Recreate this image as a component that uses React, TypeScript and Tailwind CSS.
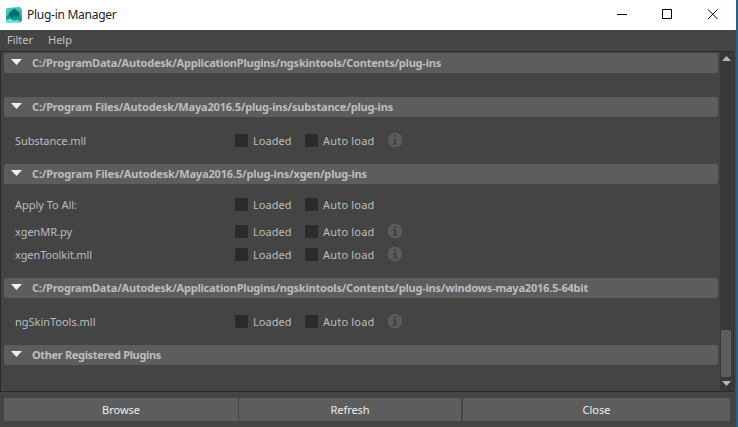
import React from "react";

function Label({ text, width, className = "" }: { text: string; width: number; className?: string }) {
  const ref = React.useRef<HTMLSpanElement>(null);
  const [spacing, setSpacing] = React.useState(0);
  // Tracks the text so that it fills its designated width.
  React.useLayoutEffect(() => {
    if (ref.current) {
      setSpacing((width - ref.current.getBoundingClientRect().width) / text.length);
    }
  }, [text, width]);
  return (
    <span ref={ref} className={`inline-block whitespace-nowrap ${className}`} style={{ letterSpacing: spacing }}>
      {text}
    </span>
  );
}

function Header({ title, width }: { title: string; width: number }) {
  return (
    <div className="flex h-5 w-[714px] shrink-0 items-center rounded-[2px] bg-[#5d5d5d] pl-[7px] text-[11px] font-bold text-[#bdbdbd]">
      <svg className="mr-[10px] -mt-[2px] h-[6px] w-[11px] shrink-0" viewBox="0 0 11 6">
        <path d="M0 0H11L5.5 6Z" fill="#f0f0f0" />
      </svg>
      <Label text={title} width={width} className="mb-[2px]" />
    </div>
  );
}

function Row({ name, width, info = true, className = "h-[23px]" }: { name: string; width: number; info?: boolean; className?: string }) {
  return (
    <div className={`flex shrink-0 items-center pl-[11px] text-[11px] text-[#bdbdbd] ${className}`}>
      <div className="w-[220px]"><Label text={name} width={width} /></div>
      <div className="flex w-[70px] items-center gap-[5px]">
        <span className="h-[13px] w-[13px] rounded-[1px] bg-[#2b2b2b]" />
        <Label text="Loaded" width={38.5} />
      </div>
      <div className="flex w-[82px] items-center gap-[5px]">
        <span className="h-[13px] w-[13px] rounded-[1px] bg-[#2b2b2b]" />
        <Label text="Auto load" width={51.5} />
      </div>
      {info && (
        <svg className="-mt-[1px] h-4 w-4" viewBox="0 0 16 16">
          <circle cx="8" cy="8" r="7.3" fill="#5b5b5b" />
          <path d="M6.8 3h2.5v2H6.8zM5.7 6.5h3.6v5h1.3v1.3H5.5v-1.3h1.3V7.7H5.7z" fill="#444" />
        </svg>
      )}
    </div>
  );
}

export default function App() {
  return (
    <div className="flex h-[427px] w-[738px] overflow-hidden bg-[#444] font-['Noto_Sans',sans-serif] leading-none">
      <div className="flex w-[736px] flex-col">
        <div className="flex h-[30px] shrink-0 items-center bg-white pl-[6px] text-[12px] text-[#222]">
          <svg className="mr-[5px] h-4 w-4" viewBox="0 0 16 16">
            <path d="M1 1L14 0L16 3V14L14 15.5H0V3Z" fill="#3fc4bc" />
            <path d="M0 10L4 5L8 1L14 5L16 11V14L9 13L4 15L0 14Z" fill="#139f98" />
            <path d="M8 2L13 6V11L11 9L10 12L8 8L6 12L5 9L3 11V6Z" fill="#086b65" />
            <path d="M0 13L4 11.5L8 14L12 13L14 15.5H0Z" fill="#6be0d6" />
          </svg>
          <Label text="Plug-in Manager" width={89.5} />
          <svg className="ml-auto h-[30px] w-[130px]" viewBox="0 0 130 30" fill="none" stroke="#000">
            <path d="M11 14.5H21M56.5 9.5H65.5V18.5H56.5ZM102 9.5L111.5 19M111.5 9.5L102 19" />
          </svg>
        </div>
        <div className="flex h-[21px] shrink-0 items-center gap-[15px] pb-[2px] pl-[7px] text-[11px] text-[#c4c4c4]">
          <Label text="Filter" width={26} />
          <Label text="Help" width={24} />
        </div>
        <div className="flex h-[341px] w-[734px] shrink-0 border border-[#2b2b2b]">
          <div className="flex w-[719px] flex-col pl-[3px] pt-[1px]">
            <Header title="C:/ProgramData/Autodesk/ApplicationPlugins/ngskintools/Contents/plug-ins" width={409} />
            <div className="h-6 shrink-0" />
            <Header title="C:/Program Files/Autodesk/Maya2016.5/plug-ins/substance/plug-ins" width={361} />
            <Row name="Substance.mll" width={71} className="h-[47px]" />
            <Header title="C:/Program Files/Autodesk/Maya2016.5/plug-ins/xgen/plug-ins" width={335} />
            <Row name="Apply To All:" width={62} info={false} className="mt-[9px] h-[23px]" />
            <Row name="xgenMR.py" width={57} className="mt-1 h-[23px]" />
            <Row name="xgenToolkit.mll" width={77} />
            <div className="h-3 shrink-0" />
            <Header title="C:/ProgramData/Autodesk/ApplicationPlugins/ngskintools/Contents/plug-ins/windows-maya2016.5-64bit" width={556} />
            <Row name="ngSkinTools.mll" width={80.5} className="h-[47px]" />
            <Header title="Other Registered Plugins" width={129} />
          </div>
          <div className="flex w-3 flex-col items-center bg-[#383838] py-[4px]">
            <svg className="h-[5px] w-[9px] shrink-0" viewBox="0 0 9 5"><path d="M0 5L4.5 0L9 5Z" fill="#b4b4b4" /></svg>
            <div className="mt-[269px] h-[47px] w-[10px] shrink-0 rounded-[2px] bg-[#5d5d5d]" />
            <svg className="mt-1 h-[5px] w-[9px] shrink-0" viewBox="0 0 9 5"><path d="M0 0L4.5 5L9 0Z" fill="#b4b4b4" /></svg>
          </div>
        </div>
        <div className="mt-[6px] flex h-[23px] gap-px pl-1 text-[11px] text-[#eee]">
          <button className="w-[234px] rounded-[1px] bg-[#5d5d5d]"><Label text="Browse" width={38} /></button>
          <button className="w-[222px] rounded-[1px] bg-[#5d5d5d]"><Label text="Refresh" width={39} /></button>
          <button className="ml-px w-[267px] rounded-[1px] bg-[#5d5d5d]"><Label text="Close" width={28} /></button>
        </div>
      </div>
      <div className="w-[2px] bg-[#28608c]" />
    </div>
  );
}
